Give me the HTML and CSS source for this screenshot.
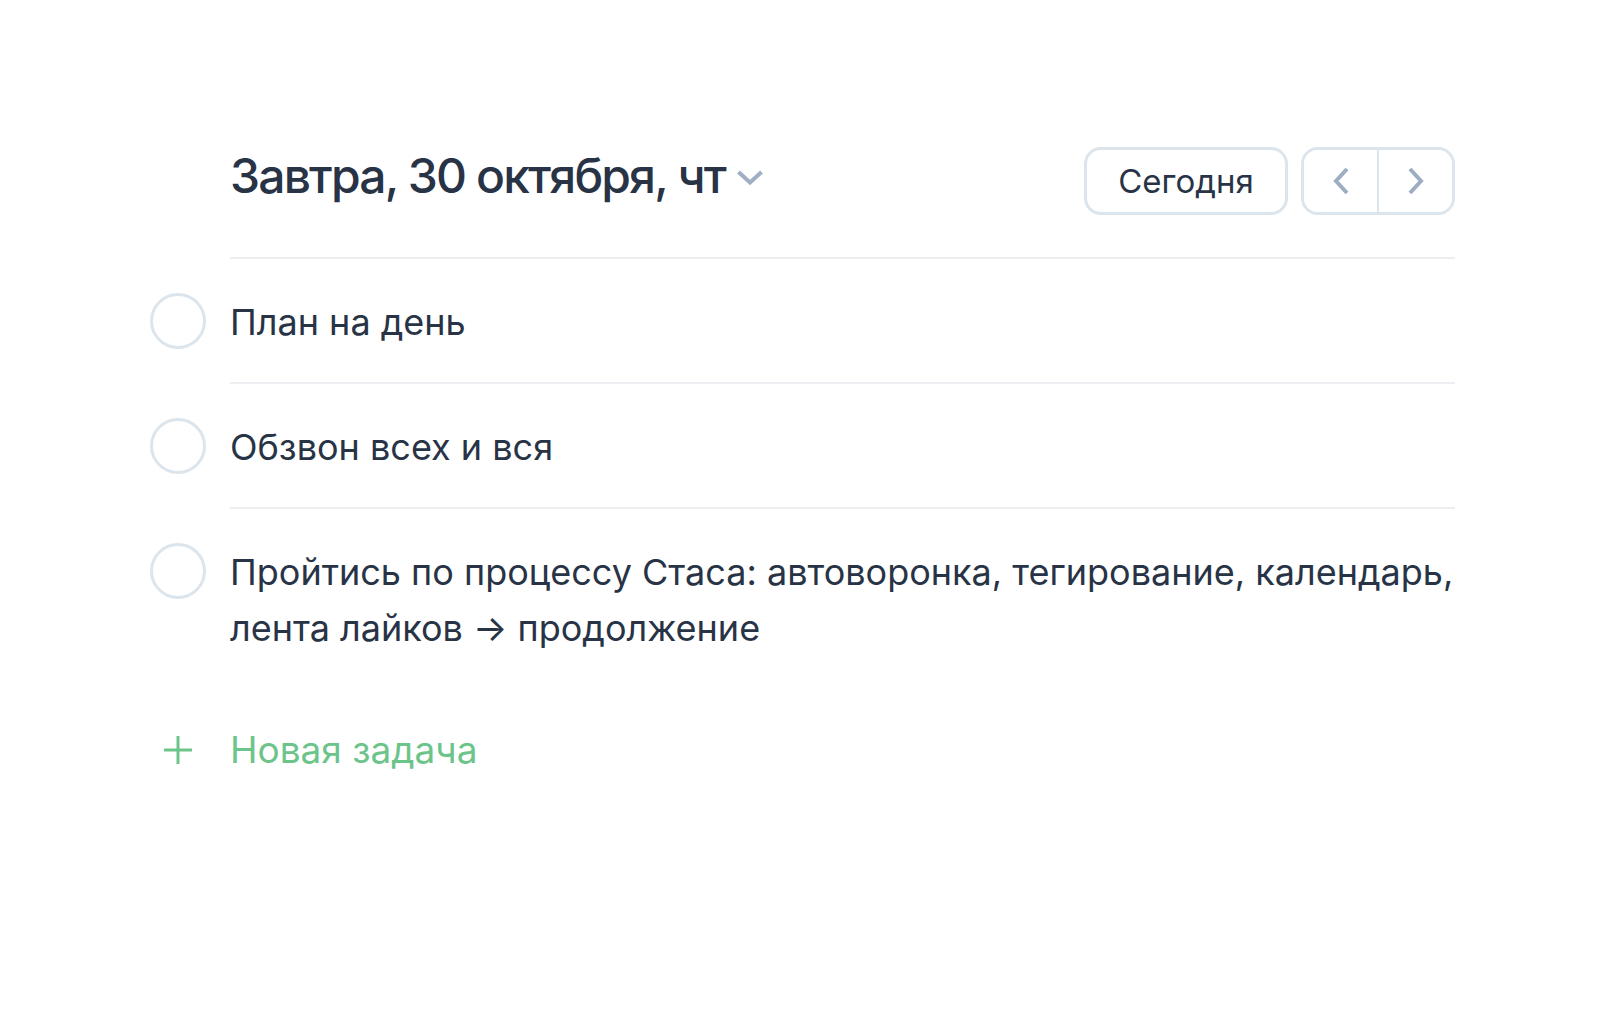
FILE: index.html
```html
<!DOCTYPE html>
<html lang="ru">
<head>
<meta charset="utf-8">
<title>Задачи</title>
<link rel="stylesheet" href="styles.css">
</head>
<body>
<main class="planner">
  <header class="day-header">
    <h1 class="day-title">Завтра, 30 октября, чт
      <svg class="title-caret" width="26" height="15" viewBox="0 0 26 15"><path d="M1.5 2 L13 12.5 L24.5 2" fill="none" stroke="#9fb0c5" stroke-width="4" stroke-linecap="butt"/></svg>
    </h1>
    <div class="day-actions">
      <button class="btn-today">Сегодня</button>
      <div class="nav-group">
        <button class="nav-btn" aria-label="Назад">
          <svg width="18" height="28" viewBox="0 0 18 28"><path d="M15 2 L4 14 L15 26" fill="none" stroke="#9dadc2" stroke-width="4"/></svg>
        </button>
        <button class="nav-btn nav-next" aria-label="Вперёд">
          <svg width="18" height="28" viewBox="0 0 18 28"><path d="M3 2 L14 14 L3 26" fill="none" stroke="#9dadc2" stroke-width="4"/></svg>
        </button>
      </div>
    </div>
  </header>

  <ul class="task-list">
    <li class="task">
      <span class="task-check"></span>
      <div class="task-body"><span class="task-title">План на день</span></div>
    </li>
    <li class="task">
      <span class="task-check"></span>
      <div class="task-body"><span class="task-title">Обзвон всех и вся</span></div>
    </li>
    <li class="task task-last">
      <span class="task-check"></span>
      <div class="task-body"><span class="task-title">Пройтись по процессу Стаса: автоворонка, тегирование, календарь, лента лайков → продолжение</span></div>
    </li>
  </ul>

  <div class="new-task">
    <svg class="new-task-plus" width="30" height="30" viewBox="0 0 30 30"><path d="M15 1 V29 M1 15 H29" stroke="#6cc48a" stroke-width="3" fill="none"/></svg>
    <span class="new-task-label">Новая задача</span>
  </div>
</main>
</body>
</html>
```

FILE: styles.css
```css
html, body {
  margin: 0;
  padding: 0;
  background: #ffffff;
}

body {
  font-family: Inter, "Noto Sans", "DejaVu Sans", sans-serif;
  color: #283446;
}

.planner {
  width: 1305px;
  margin-left: 150px;
  padding-top: 146px;
}

.day-header {
  display: flex;
  align-items: center;
  justify-content: space-between;
  margin-left: 80px;
  padding-bottom: 42px;
  border-bottom: 2px solid #eceef1;
}

.day-title {
  margin: 0 0 10px 0;
  font-size: 48px;
  font-weight: 500;
  letter-spacing: -1.85px;
  display: flex;
  align-items: center;
  gap: 12px;
}

.title-caret {
  display: block;
  margin-top: 4px;
}

.day-actions {
  display: flex;
  gap: 13px;
}

.btn-today {
  width: 204px;
  height: 68px;
  border: 3px solid #dce4ec;
  border-radius: 17px;
  background: #fff;
  font-family: inherit;
  font-size: 33px;
  color: #283446;
  padding: 0;
}

.nav-group {
  display: flex;
  width: 154px;
  height: 68px;
  box-sizing: border-box;
  border: 3px solid #dce4ec;
  border-radius: 17px;
  overflow: hidden;
}

.nav-btn {
  flex: 1;
  border: 0;
  background: #fff;
  padding: 0;
  display: flex;
  align-items: center;
  justify-content: center;
}

.nav-next {
  border-left: 2px solid #dce4ec;
}

.task-list {
  list-style: none;
  margin: 0;
  padding: 0;
}

.task {
  display: flex;
  gap: 24px;
}

.task-check {
  flex: none;
  width: 56px;
  height: 56px;
  box-sizing: border-box;
  border: 3px solid #dce4ec;
  border-radius: 50%;
  margin-top: 34px;
}

.task-body {
  flex: 1;
  padding: 35px 0 32px;
  border-bottom: 2px solid #eceef1;
}

.task-last .task-body {
  border-bottom: 0;
}

.task-title {
  display: block;
  margin-right: -60px;
  font-size: 36px;
  line-height: 56px;
}

.new-task {
  display: flex;
  align-items: center;
  gap: 24px;
  margin-top: 34px;
}

.new-task-plus {
  display: block;
  width: 56px;
  flex: none;
}

.new-task-label {
  font-size: 37px;
  line-height: 56px;
  color: #6cc48a;
}
```
